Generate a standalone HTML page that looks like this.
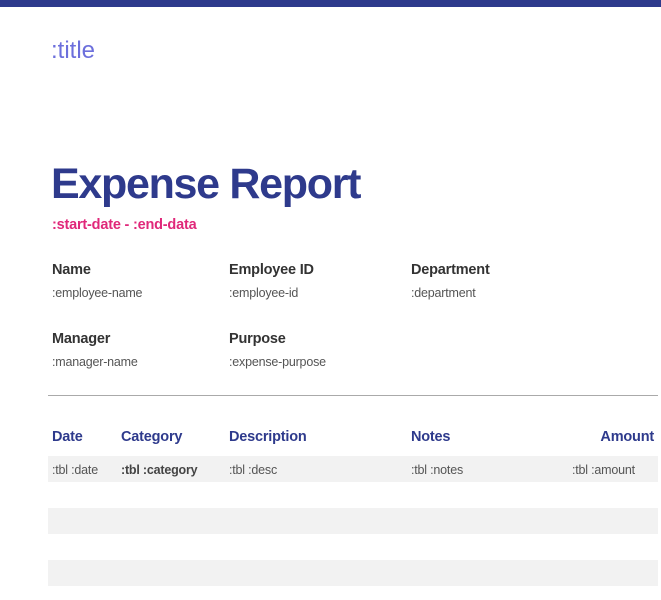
<!DOCTYPE html>
<html><head><style>
body{margin:0;width:661px;height:600px;background:#fff;font-family:"Liberation Sans",sans-serif;position:relative;overflow:hidden}
.a{position:absolute;white-space:nowrap}
.lb{font-size:14.5px;font-weight:bold;color:#333;letter-spacing:-0.2px}
.v{font-size:12.5px;color:#555;letter-spacing:-0.2px}
.h{font-size:14.5px;font-weight:bold;color:#2e3a8c;letter-spacing:-0.2px}
.row{position:absolute;left:48px;width:610px;height:26px;background:#f2f2f2}
.c{font-size:12.5px;color:#555;top:463px;letter-spacing:-0.2px}
</style></head><body>
<div class="a" style="left:0;top:0;width:661px;height:7px;background:#2e3a8c"></div>
<div class="a" style="left:51px;top:37px;font-size:24px;color:#6c6fdc">:title</div>
<div class="a" style="left:51px;top:160px;font-size:43px;font-weight:bold;color:#2e3a8c;letter-spacing:-1.3px">Expense Report</div>
<div class="a" style="left:52px;top:217px;font-size:14.5px;font-weight:bold;color:#e0287a;letter-spacing:-0.2px">:start-date - :end-data</div>
<div class="a lb" style="left:52px;top:262px">Name</div>
<div class="a v" style="left:52px;top:286px">:employee-name</div>
<div class="a lb" style="left:229px;top:262px">Employee ID</div>
<div class="a v" style="left:229px;top:286px">:employee-id</div>
<div class="a lb" style="left:411px;top:262px">Department</div>
<div class="a v" style="left:411px;top:286px">:department</div>
<div class="a lb" style="left:52px;top:331px">Manager</div>
<div class="a v" style="left:52px;top:355px">:manager-name</div>
<div class="a lb" style="left:229px;top:331px">Purpose</div>
<div class="a v" style="left:229px;top:355px">:expense-purpose</div>
<div class="a" style="left:48px;top:395px;width:610px;height:1px;background:#aaa"></div>
<div class="a h" style="left:52px;top:429px">Date</div>
<div class="a h" style="left:121px;top:429px">Category</div>
<div class="a h" style="left:229px;top:429px">Description</div>
<div class="a h" style="left:411px;top:429px">Notes</div>
<div class="a h" style="right:7px;top:429px">Amount</div>
<div class="row" style="top:456px"></div>
<div class="row" style="top:508px"></div>
<div class="row" style="top:560px"></div>
<div class="a c" style="left:52px">:tbl :date</div>
<div class="a c" style="left:121px;font-weight:bold;color:#444">:tbl :category</div>
<div class="a c" style="left:229px">:tbl :desc</div>
<div class="a c" style="left:411px">:tbl :notes</div>
<div class="a c" style="left:572px">:tbl :amount</div>
</body></html>
